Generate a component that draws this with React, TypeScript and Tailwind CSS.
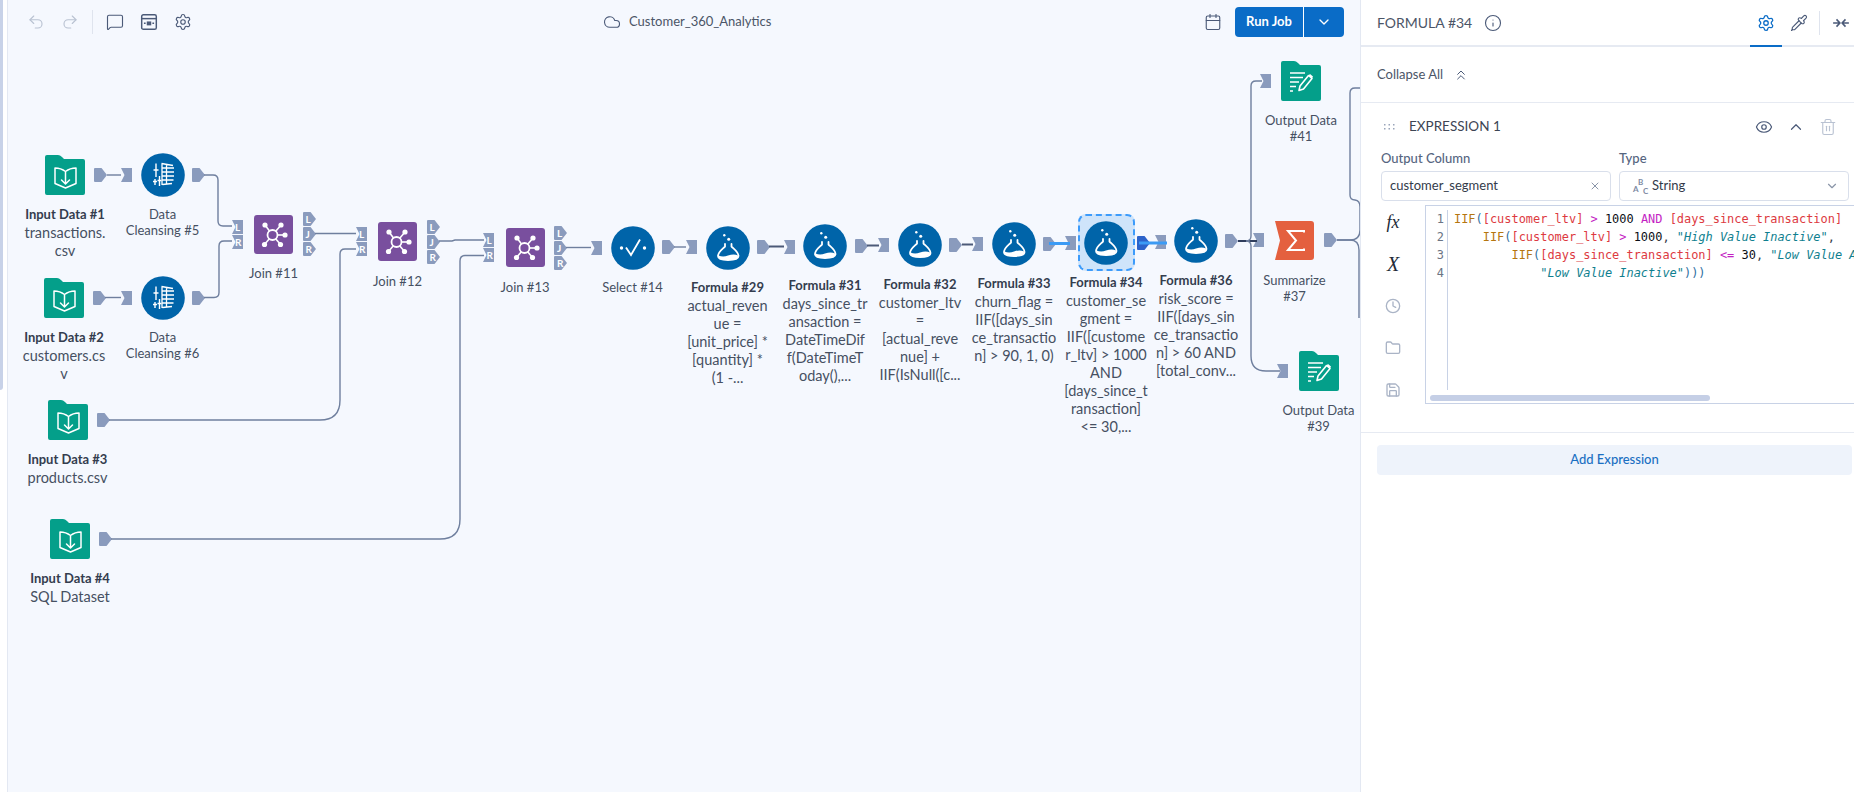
import { Calendar, ChevronDown, ChevronUp, ChevronsUp, Clock, Cloud, Eye, Folder, Info, MessageSquare, Pipette, Redo2, Save, Settings, Trash2, Undo2, X } from "lucide-react";
import type { ReactNode } from "react";

const WIRE = "#6f7f9e";
const DARK = "#4c5a78";
const SELECTED = "#3b9bf5";

// wires, in page coordinates
const WIRES: { d: string; color?: string; w?: number }[] = [
  { d: "M107 175H121" },
  { d: "M105 297.5H121" },
  { d: "M204 175H213Q218 175 218 180V221Q218 226 223 226H232" },
  { d: "M204 297.5H214Q219 297.5 219 292.5V246Q219 241 224 241H232" },
  { d: "M315 233.5H356" },
  { d: "M439 241H452L455 240H484" },
  { d: "M566 247.5H591" },
  { d: "M109 420H320Q340 420 340 400V254Q340 249 345 249H356" },
  { d: "M111 539H440Q460 539 460 519V261Q460 255.5 465 255.5H484" },
  { d: "M674 247H686" },
  { d: "M769 246.5H784", color: DARK, w: 2 },
  { d: "M867 245.5H879", color: DARK, w: 2 },
  { d: "M962 244.5H973", color: DARK, w: 2 },
  { d: "M1049 243.5H1070", color: SELECTED, w: 3 },
  { d: "M1139 243H1167", color: SELECTED, w: 3 },
  { d: "M1238 241H1257", color: "#2f3d5c", w: 2 },
  { d: "M1246 241Q1251 241 1251 236V86Q1251 81 1256 81H1262" },
  { d: "M1246 241Q1251 241 1251 246V356Q1251 371 1266 371H1280" },
  { d: "M1337 240H1350Q1360 240 1360 230V207Q1360 200.5 1355 200Q1350 200 1350 195V93Q1350 88 1355 88H1362" },
  { d: "M1337 240H1350Q1359 240 1359 250V318" },
];

const OUT = "M1 0H7.5L13 7L7.5 14H1Q0 14 0 13V1Q0 0 1 0Z";
const IN = "M0 0H11V14H0L3.5 7Z";

function Anchor({ x, y, kind, letter }: { x: number; y: number; kind: "in" | "out"; letter?: string }) {
  return (
    <div className="absolute h-[14px] w-[13px]" style={{ left: x, top: y - 7 }}>
      <svg width="13" height="14" viewBox="0 0 13 14" className="absolute inset-0">
        <path d={kind === "out" ? OUT : IN} fill="#8a9bbd" />
      </svg>
      {letter && (
        <span className={`absolute top-0 text-[10px] leading-[14px] font-bold text-white ${kind === "out" ? "left-[3px]" : "left-[3.5px]"}`}>
          {letter}
        </span>
      )}
    </div>
  );
}

function Label({ x, y, title, name, desc }: { x: number; y: number; title?: string; name?: string[]; desc?: string[] }) {
  return (
    <div className="absolute w-[110px] -translate-x-1/2 text-center whitespace-nowrap" style={{ left: x, top: y + 1 }}>
      {title && <div className="text-[13px] leading-4 font-bold text-[#343d4e]">{title}</div>}
      {name?.map((l) => (
        <div key={l} className="text-[13px] leading-4 text-[#465062]">{l}</div>
      ))}
      {desc && (
        <div className="mt-[2px] text-[14.5px] leading-[18px] text-[#465062]">
          {desc.map((l) => (
            <div key={l}>{l}</div>
          ))}
        </div>
      )}
    </div>
  );
}

function Glyph({ x, y, size, children }: { x: number; y: number; size: number; children: ReactNode }) {
  return (
    <svg className="absolute" width={size} height={size} viewBox={`0 0 ${size} ${size}`} style={{ left: x - size / 2, top: y - size / 2 }}>
      {children}
    </svg>
  );
}

const FOLDER = "M2 0H13Q15 0 17 2L19 4H38Q40 4 40 6V38Q40 40 38 40H2Q0 40 0 38V2Q0 0 2 0Z";

function InputIcon({ x, y }: { x: number; y: number }) {
  return (
    <Glyph x={x} y={y} size={40}>
      <path d={FOLDER} fill="#049f8a" />
      <path d="M10 13Q16 13 20.500 16.500Q25 13 31 13V28.500L20.500 33L10 28.500Z M20.500 16.500V28 M16.500 25L20.500 29L24.500 25" fill="none" stroke="#fff" strokeWidth="1.500" strokeLinejoin="round" strokeLinecap="round" />
    </Glyph>
  );
}

function OutputIcon({ x, y }: { x: number; y: number }) {
  return (
    <Glyph x={x} y={y} size={40}>
      <path d={FOLDER} fill="#049f8a" />
      <path d="M9 12H24 M9 16.500H22 M9 21H18 M9 25.500H15 M9 30H12" stroke="#fff" strokeWidth="1.600" fill="none" />
      <path d="M18 29.500L19 25L27.500 14.500L31 17.500L22.500 28Z" fill="none" stroke="#fff" strokeWidth="1.600" strokeLinejoin="round" />
      <path d="M27.500 14.500L29 13L32 15.500L31 17.500Z" fill="#fff" />
    </Glyph>
  );
}

function Circle({ x, y, children }: { x: number; y: number; children: ReactNode }) {
  return (
    <Glyph x={x} y={y} size={44}>
      <circle cx="22" cy="22" r="21.8" fill="#0064a9" />
      {children}
    </Glyph>
  );
}

function Flask({ x, y }: { x: number; y: number }) {
  return (
    <Circle x={x} y={y}>
      <circle cx="18.300" cy="9.300" r="1.200" fill="#fff" />
      <circle cx="22.700" cy="13.300" r="1.500" fill="#fff" />
      <path d="M19 18V20.500C16.500 23 12 26 12 30C12 33 15.500 34 22 34C28.500 34 32.500 33 32.500 30C32.500 26 28 23 25.500 20.500V18" fill="none" stroke="#fff" strokeWidth="1.800" strokeLinecap="round" />
      <path d="M12.500 29.500Q17 31.500 22 29.500Q28 27.500 32 29.500Q33 33.500 22 34Q11.500 33.500 12.500 29.500Z" fill="#fff" />
    </Circle>
  );
}

function Cleanse({ x, y }: { x: number; y: number }) {
  return (
    <Circle x={x} y={y}>
      <path d="M15 10.500V24 M12.500 17H17.500 M14 26V32 M12 28.500H16 M18.500 23V33 M16.500 27.500H20.500" fill="none" stroke="#fff" strokeWidth="1.400" />
      <path d="M20.500 10.500L32 12.500M21 15H33M21 19H33M21 23H33M21 27H32.500M21.500 31.500L31 30.500M21 10.500V32M25.500 11.500V31" fill="none" stroke="#fff" strokeWidth="1.300" />
    </Circle>
  );
}

function JoinIcon({ x, y }: { x: number; y: number }) {
  const ends: [number, number][] = [[11, 10], [27, 10], [31, 20], [26.500, 29.500], [10.500, 29.500]];
  return (
    <Glyph x={x} y={y} size={39}>
      <rect width="39" height="39" rx="3" fill="#794f9e" />
      {ends.map(([a, b]) => (
        <g key={a + "-" + b}>
          <path d={`M18.500 20L${a} ${b}`} stroke="#fff" strokeWidth="1.600" />
          <circle cx={a} cy={b} r="2.600" fill="#fff" />
        </g>
      ))}
      <circle cx="18.500" cy="20" r="5" fill="#794f9e" stroke="#fff" strokeWidth="1.800" />
    </Glyph>
  );
}

function Join({ x, y, name }: { x: number; y: number; name: string }) {
  return (
    <>
      <JoinIcon x={x} y={y} />
      <Anchor x={x - 42} y={y - 7.5} kind="in" letter="L" />
      <Anchor x={x - 42} y={y + 7.5} kind="in" letter="R" />
      <Anchor x={x + 29} y={y - 15} kind="out" letter="L" />
      <Anchor x={x + 29} y={y} kind="out" letter="J" />
      <Anchor x={x + 29} y={y + 15} kind="out" letter="R" />
      <Label x={x} y={y + 30} name={[name]} />
    </>
  );
}

function Toolbar() {
  return (
    <div className="relative z-10 flex h-[44px] items-center pr-[16px]">
      <div className="flex w-[595px] shrink-0 items-center gap-4 pl-[19px]">
        <Undo2 className="size-[18px] text-[#b9c2d2]" strokeWidth={1.500} />
        <Redo2 className="size-[18px] text-[#b9c2d2]" strokeWidth={1.500} />
        <div className="-mx-[3px] h-6 w-px bg-[#dfe4ee]" />
        <MessageSquare className="size-[18px] text-[#4b5a78]" strokeWidth={1.500} />
        <svg className="size-[18px] text-[#4b5a78]" viewBox="0 0 16 16" fill="none" stroke="currentColor" strokeWidth="1.300">
          <rect x="1.500" y="1.500" width="13" height="13" rx="1.500" />
          <path d="M1.500 5H14.500" />
          <rect x="6" y="7.500" width="4" height="3.500" fill="currentColor" stroke="none" />
          <path d="M3.500 9.200H5 M11 9.200H12.500" />
        </svg>
        <Settings className="size-[18px] text-[#4b5a78]" strokeWidth={1.500} />
      </div>
      <Cloud className="size-[18px] text-[#4b5a78]" strokeWidth={1.500} />
      <span className="ml-[8px] text-[13px] text-[#4b5567]">Customer_360_Analytics</span>
      <div className="flex-1" />
      <Calendar className="mr-[13px] size-[18px] text-[#4b5a78]" strokeWidth={1.500} />
      <div className="flex h-[30px] w-[109px] items-center rounded bg-[#0a6cc7] text-white">
        <span className="w-[68px] text-center text-[13px] font-bold">Run Job</span>
        <div className="h-full w-px bg-white" />
        <div className="flex flex-1 justify-center">
          <ChevronDown className="size-4" />
        </div>
      </div>
    </div>
  );
}

function Diagram() {
  return (
    <div className="absolute top-0 left-[-8px]">
      <InputIcon x={65} y={175} />
      <Anchor x={94} y={175} kind="out" />
      <Anchor x={121} y={175} kind="in" />
      <Label x={65} y={205} title="Input Data #1" desc={["transactions.", "csv"]} />
      <Cleanse x={162.5} y={175} />
      <Anchor x={192} y={175} kind="out" />
      <Label x={162.5} y={205} name={["Data", "Cleansing #5"]} />

      <InputIcon x={64} y={297.5} />
      <Anchor x={93} y={297.5} kind="out" />
      <Anchor x={121} y={297.5} kind="in" />
      <Label x={64} y={328} title="Input Data #2" desc={["customers.cs", "v"]} />
      <Cleanse x={162.5} y={297.5} />
      <Anchor x={192} y={297.5} kind="out" />
      <Label x={162.5} y={328} name={["Data", "Cleansing #6"]} />

      <InputIcon x={67.5} y={420} />
      <Anchor x={97} y={420} kind="out" />
      <Label x={67.5} y={450} title="Input Data #3" desc={["products.csv"]} />
      <InputIcon x={70} y={539} />
      <Anchor x={99} y={539} kind="out" />
      <Label x={70} y={569} title="Input Data #4" desc={["SQL Dataset"]} />

      <Join x={273.5} y={234} name="Join #11" />
      <Join x={397.5} y={241.5} name="Join #12" />
      <Join x={525} y={247.5} name="Join #13" />

      <Anchor x={591} y={247.5} kind="in" />
      <Circle x={632.5} y={247.5}>
        <circle cx="10.500" cy="22" r="1.700" fill="#fff" />
        <circle cx="33.500" cy="22" r="1.700" fill="#fff" />
        <path d="M15 21.500L20 29L29 13.500" fill="none" stroke="#fff" strokeWidth="1.800" />
      </Circle>
      <Anchor x={662} y={247} kind="out" />
      <Label x={632.5} y={278} name={["Select #14"]} />

      <Anchor x={686} y={247} kind="in" />
      <Flask x={727.5} y={247.5} />
      <Anchor x={757} y={247} kind="out" />
      <Label x={727.5} y={278} title="Formula #29" desc={["actual_reven", "ue =", "[unit_price] *", "[quantity] *", "(1 -..."]} />

      <Anchor x={783.5} y={246.5} kind="in" />
      <Flask x={825} y={246} />
      <Anchor x={854.5} y={246} kind="out" />
      <Label x={825} y={276} title="Formula #31" desc={["days_since_tr", "ansaction =", "DateTimeDif", "f(DateTimeT", "oday(),..."]} />

      <Anchor x={878} y={245} kind="in" />
      <Flask x={920} y={245} />
      <Anchor x={949} y={245} kind="out" />
      <Label x={920} y={275} title="Formula #32" desc={["customer_ltv", "=", "[actual_reve", "nue] +", "IIF(IsNull([c..."]} />

      <Anchor x={972} y={244} kind="in" />
      <Flask x={1014} y={244} />
      <Anchor x={1043} y={243.5} kind="out" />
      <Label x={1014} y={274} title="Formula #33" desc={["churn_flag =", "IIF([days_sin", "ce_transactio", "n] > 90, 1, 0)"]} />

      <Anchor x={1065} y={243} kind="in" />
      <div className="absolute top-[214px] left-[1078px] h-[57px] w-[57px] rounded-lg border-[2.5px] border-dashed border-[#3c9bfb] bg-[#cfe4fa]" />
      <Flask x={1106} y={242.5} />
      <div className="absolute h-[14px] w-[13px]" style={{ left: 1137, top: 236 }}>
        <svg width="13" height="14" viewBox="0 0 13 14">
          <path d={OUT} fill="#2c62c9" />
        </svg>
      </div>
      <Label x={1106} y={273} title="Formula #34" desc={["customer_se", "gment =", "IIF([custome", "r_ltv] > 1000", "AND", "[days_since_t", "ransaction]", "<= 30,..."]} />

      <Anchor x={1155} y={241.5} kind="in" />
      <Flask x={1196} y={241} />
      <Anchor x={1225} y={241} kind="out" />
      <Label x={1196} y={271} title="Formula #36" desc={["risk_score =", "IIF([days_sin", "ce_transactio", "n] > 60 AND", "[total_conv..."]} />

      <Anchor x={1253} y={240} kind="in" />
      <Glyph x={1294.5} y={240} size={39}>
        <path d="M0 0H36Q39 0 39 3V36Q39 39 36 39H0L5 19.500Z" fill="#e4603f" />
        <path d="M29 11.500V10H13L21 19.500L13 29H29V27.500" fill="none" stroke="#fff" strokeWidth="2" />
      </Glyph>
      <Anchor x={1324} y={240} kind="out" />
      <Label x={1294.5} y={271} name={["Summarize", "#37"]} />

      <Anchor x={1260} y={81} kind="in" />
      <OutputIcon x={1301} y={81} />
      <Label x={1301} y={111} name={["Output Data", "#41"]} />
      <Anchor x={1277} y={371} kind="in" />
      <OutputIcon x={1318.5} y={371} />
      <Label x={1318.5} y={401} name={["Output Data", "#39"]} />

      {/* wires are painted over the anchors */}
      <svg className="absolute top-0 left-0" width="1854" height="792" viewBox="0 0 1854 792" fill="none">
        {WIRES.map((w) => (
          <path key={w.d} d={w.d} stroke={w.color ?? WIRE} strokeWidth={w.w ?? 1.4} />
        ))}
      </svg>
    </div>
  );
}

function Canvas() {
  return (
    <div className="relative min-w-0 flex-1 border-l border-[#e3e8f2] bg-[#f5f8fe]">
      <Diagram />
      <Toolbar />
    </div>
  );
}

function Code({ c, children }: { c: string; children: ReactNode }) {
  return <span className={c}>{children}</span>;
}

const FN = "text-[#b5760f]";
const PAREN = "text-[#2f6f9f]";
const FIELD = "text-[#dd3a3f]";
const OP = "text-[#c41fc4]";
const NUM = "text-[#0a0d14]";
const STR = "italic text-[#0f7f8f]";
const PLAIN = "text-[#333b4a]";

function Editor() {
  return (
    <div className="relative flex h-[199px] flex-1 overflow-hidden border border-[#c8d2e6] bg-white pt-[4px] font-['DejaVu_Sans_Mono',monospace] text-[11.95px] leading-[18px]">
      <div className="h-[180px] w-[22px] shrink-0 border-r border-[#c8d2e6] pr-[3px] text-right text-[#6b7484]">
        <div>1</div>
        <div>2</div>
        <div>3</div>
        <div>4</div>
      </div>
      <pre className="ml-[6px] font-['DejaVu_Sans_Mono',monospace]">
        <div>
          <Code c={FN}>IIF</Code><Code c={PAREN}>(</Code><Code c={FIELD}>[customer_ltv]</Code> <Code c={OP}>&gt;</Code> <Code c={NUM}>1000</Code> <Code c={OP}>AND</Code> <Code c={FIELD}>[days_since_transaction]</Code>
        </div>
        <div>
          {"    "}<Code c={FN}>IIF</Code><Code c={PAREN}>(</Code><Code c={FIELD}>[customer_ltv]</Code> <Code c={OP}>&gt;</Code> <Code c={NUM}>1000</Code><Code c={PLAIN}>,</Code> <Code c={STR}>"High Value Inactive"</Code><Code c={PLAIN}>,</Code>
        </div>
        <div>
          {"        "}<Code c={FN}>IIF</Code><Code c={PAREN}>(</Code><Code c={FIELD}>[days_since_transaction]</Code> <Code c={OP}>&lt;=</Code> <Code c={NUM}>30</Code><Code c={PLAIN}>,</Code> <Code c={STR}>"Low Value Active"</Code><Code c={PLAIN}>,</Code>
        </div>
        <div>
          {"            "}<Code c={STR}>"Low Value Inactive"</Code><Code c={PAREN}>)))</Code>
        </div>
      </pre>
      <div className="absolute top-[189px] left-[4px] h-[6px] w-[280px] rounded-[3px] bg-[#c5cfe6]" />
    </div>
  );
}

function SideTool({ children }: { children: ReactNode }) {
  return <div className="flex h-[42px] items-center justify-center">{children}</div>;
}

function Panel() {
  return (
    <div className="z-20 flex h-full w-[494px] shrink-0 flex-col border-l border-[#e3e8f2] bg-white">
      <div className="flex h-[47px] shrink-0 items-center border-b-2 border-[#e6eaf2] pr-[4px] pl-[16px]">
        <span className="text-[14px] text-[#4b5567]">FORMULA #34</span>
        <Info className="ml-[12px] size-[18px] text-[#4b5a78]" strokeWidth={1.500} />
        <div className="flex-1" />
        <div className="relative flex h-[47px] w-8 items-center justify-center">
          <Settings className="size-[18px] text-[#0a6cc7]" strokeWidth={1.700} />
          <div className="absolute right-0 bottom-[-1px] left-0 h-[2px] bg-[#0a6cc7]" />
        </div>
        <Pipette className="mx-2 size-[18px] text-[#4b5a78]" strokeWidth={1.500} />
        <div className="mr-[12px] ml-[3px] h-6 w-px bg-[#dfe4ee]" />
        <svg className="size-[18px] text-[#4b5a78]" viewBox="0 0 16 16" fill="none" stroke="currentColor" strokeWidth="1.400">
          <path d="M1 8H6.500 M4 4.800L7 8L4 11.200 M15 8H9.500 M12 4.800L9 8L12 11.200" />
        </svg>
      </div>
      <div className="flex h-[56px] shrink-0 items-center gap-[10px] border-b border-[#e6eaf2] pl-[16px]">
        <span className="text-[13px] text-[#4b5567]">Collapse All</span>
        <ChevronsUp className="size-4 text-[#4b5a78]" strokeWidth={1.500} />
      </div>
      <div className="h-[330px] shrink-0 border-b border-[#e6eaf2] pr-[4px] pl-[20px]">
        <div className="flex h-[47px] items-center pr-[13px]">
          <svg className="mr-[14px] ml-[3px] h-2 w-[11px] text-[#9aa5ba]" viewBox="0 0 11 8" fill="currentColor">
            <rect x="0" y="1" width="1.500" height="1.500" />
            <rect x="4.500" y="1" width="1.500" height="1.500" />
            <rect x="9" y="1" width="1.500" height="1.500" />
            <rect x="0" y="5" width="1.500" height="1.500" />
            <rect x="4.500" y="5" width="1.500" height="1.500" />
            <rect x="9" y="5" width="1.500" height="1.500" />
          </svg>
          <span className="text-[13.5px] text-[#3d4554]">EXPRESSION 1</span>
          <div className="flex-1" />
          <Eye className="size-[18px] text-[#4b5a78]" strokeWidth={1.600} />
          <ChevronUp className="ml-[14px] size-[18px] text-[#4b5a78]" strokeWidth={1.600} />
          <Trash2 className="ml-[14px] size-[18px] text-[#b9c2d2]" strokeWidth={1.500} />
        </div>
        <div className="flex gap-2 pr-[1px]">
          <div className="w-[230px]">
            <div className="text-[13px] leading-[17px] font-medium text-[#56657f]">Output Column</div>
            <div className="mt-[4px] flex h-[30px] items-center rounded border border-[#d9dfeb] pr-[9px] pl-[8px]">
              <span className="flex-1 text-[13px] text-[#333b4a]">customer_segment</span>
              <X className="size-3 text-[#8a95a8]" />
            </div>
          </div>
          <div className="flex-1">
            <div className="text-[13px] leading-[17px] font-medium text-[#56657f]">Type</div>
            <div className="mt-[4px] flex h-[30px] items-center rounded border border-[#d9dfeb] pr-[9px] pl-[13px]">
              <span className="relative mr-[4px] h-[16px] w-[15px] font-bold text-[#7d8aa3]">
                <span className="absolute bottom-0 left-0 text-[8px] leading-[10px]">A</span>
                <span className="absolute top-[-1px] left-[5px] text-[8px] leading-[10px]">B</span>
                <span className="absolute bottom-[-2px] left-[10px] text-[8px] leading-[10px]">C</span>
              </span>
              <span className="flex-1 text-[13px] text-[#333b4a]">String</span>
              <ChevronDown className="size-[14px] text-[#8a95a8]" />
            </div>
          </div>
        </div>
        <div className="mt-[4px] flex">
          <div className="-mt-[4px] w-[24px] shrink-0 font-['Liberation_Serif',serif] text-[#222936] italic">
            <SideTool><span className="text-[18px]">fx</span></SideTool>
            <SideTool><span className="text-[20px]">X</span></SideTool>
            <SideTool><Clock className="size-4 text-[#aab4c6]" /></SideTool>
            <SideTool><Folder className="size-4 text-[#aab4c6]" /></SideTool>
            <SideTool><Save className="size-4 text-[#aab4c6]" /></SideTool>
          </div>
          <div className="ml-[20px] flex flex-1">
            <Editor />
          </div>
        </div>
      </div>
      <div className="mt-[12px] pr-[2px] pl-[16px]">
        <div className="flex h-[30px] items-center justify-center rounded bg-[#eef3fb] text-[13px] font-medium text-[#1a6fc2]">Add Expression</div>
      </div>
    </div>
  );
}

export default function App() {
  return (
    <div className="flex h-[792px] w-[1854px] overflow-hidden bg-white font-[Lato,sans-serif]">
      <div className="w-[7px] shrink-0">
        <div className="h-[390px] w-[3px] rounded-br-[3px] bg-[#c8d2e8]" />
      </div>
      <Canvas />
      <Panel />
    </div>
  );
}
